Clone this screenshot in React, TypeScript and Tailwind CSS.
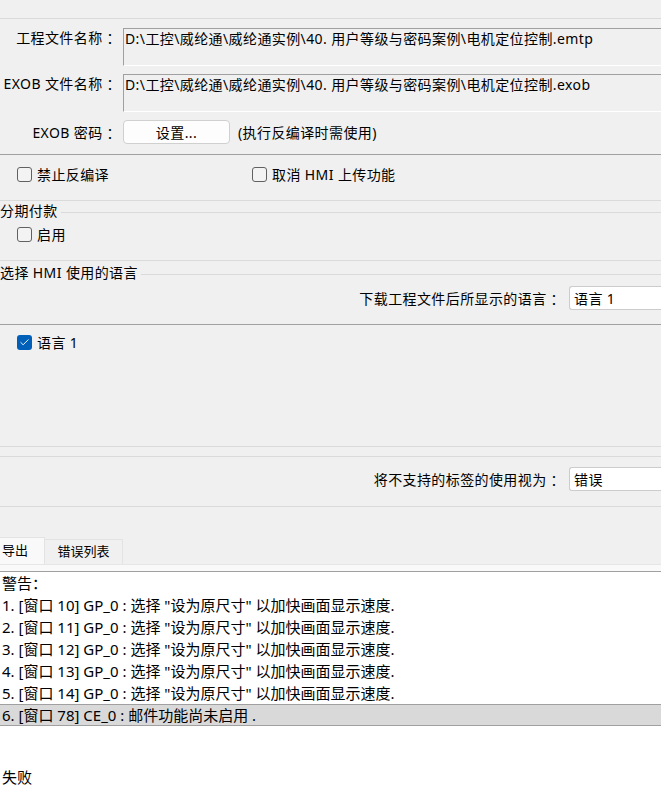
import { Check } from 'lucide-react';

const warnings = [
  '1. [窗口 10] GP_0 : 选择 "设为原尺寸" 以加快画面显示速度.',
  '2. [窗口 11] GP_0 : 选择 "设为原尺寸" 以加快画面显示速度.',
  '3. [窗口 12] GP_0 : 选择 "设为原尺寸" 以加快画面显示速度.',
  '4. [窗口 13] GP_0 : 选择 "设为原尺寸" 以加快画面显示速度.',
  '5. [窗口 14] GP_0 : 选择 "设为原尺寸" 以加快画面显示速度.',
];

function CheckBox({ checked, label }: { checked?: boolean; label: string }) {
  return (
    <label className="flex items-center gap-[5px]">
      {checked ? (
        <span className="flex h-[15px] w-[15px] items-center justify-center rounded-[3px] bg-[#005fb8]">
          <Check className="h-[11px] w-[11px] text-white" strokeWidth={2} />
        </span>
      ) : (
        <span className="h-[15px] w-[15px] rounded-[3px] border border-[#616161] bg-[#f3f3f3]" />
      )}
      <span>{label}</span>
    </label>
  );
}

function PathBox({ value }: { value: string }) {
  return (
    <div className="h-[38px] flex-1 whitespace-nowrap border-l border-t border-b border-l-[#a0a0a0] border-t-[#a0a0a0] border-b-white pl-[1px] pt-[1px] leading-[18px]">
      {value}
    </div>
  );
}

function SelectBox({ value }: { value: string }) {
  return (
    <div className="flex h-[24px] flex-1 items-center rounded-l-[3px] border border-r-0 border-[#cccccc] bg-white pl-[4px]">
      {value}
    </div>
  );
}

function GroupTitle({ text }: { text: string }) {
  return (
    <div className="flex h-[18px] items-center">
      <span className="pr-[3px]">{text}</span>
      <div className="mt-[4px] h-px flex-1 bg-[#dadada]" />
    </div>
  );
}

export default function App() {
  return (
    <div className="h-[786px] w-[661px] overflow-hidden bg-[#f0f0f0] font-['Noto_Sans','Noto_Sans_CJK_SC',sans-serif] text-[14px] tracking-[0.4px] text-black">
      <div className="h-[19px] border-b border-[#dadada]" />

      <div className="h-[136px] border-b border-[#a0a0a0] pt-[9px]">
        <div className="flex items-start">
          <div className="w-[123px] pr-[2px] pt-[1px] text-right leading-[18px]">工程文件名称 ：</div>
          <PathBox value="D:\工控\威纶通\威纶通实例\40. 用户等级与密码案例\电机定位控制.emtp" />
        </div>
        <div className="mt-[8px] flex items-start">
          <div className="w-[123px] pr-[2px] pt-[1px] text-right leading-[18px]">EXOB 文件名称 ：</div>
          <PathBox value="D:\工控\威纶通\威纶通实例\40. 用户等级与密码案例\电机定位控制.exob" />
        </div>
        <div className="mt-[8px] flex items-center">
          <div className="w-[123px] pr-[2px] text-right">EXOB 密码 ：</div>
          <button className="flex h-[24px] w-[107px] items-center justify-center rounded-[4px] border border-[#d0d0d0] bg-[#fdfdfd]">
            设置...
          </button>
          <span className="ml-[8px]">(执行反编译时需使用)</span>
        </div>
      </div>

      <div className="flex h-[46px] items-start border-b border-[#dadada] pl-[17px] pt-[9px]">
        <div className="w-[235px]">
          <CheckBox label="禁止反编译" />
        </div>
        <CheckBox label="取消 HMI 上传功能" />
      </div>

      <div className="h-[60px] border-b border-[#dadada]">
        <GroupTitle text="分期付款" />
        <div className="pl-[17px] pt-[5px]">
          <CheckBox label="启用" />
        </div>
      </div>

      <div className="h-[64px] border-b border-[#a0a0a0] pt-[2px]">
        <GroupTitle text="选择 HMI 使用的语言" />
        <div className="mt-[5px] flex items-center">
          <div className="flex-1 pr-[4px] text-right">下载工程文件后所显示的语言 ：</div>
          <div className="flex w-[92px]">
            <SelectBox value="语言 1" />
          </div>
        </div>
      </div>

      <div className="h-[122px] border-b border-[#dadada] pl-[17px] pt-[7px]">
        <CheckBox checked label="语言 1" />
      </div>

      <div className="h-[10px] border-b border-[#dadada]" />

      <div className="h-[50px] border-b border-[#dadada] pt-[10px]">
        <div className="flex items-center">
          <div className="flex-1 pr-[4px] text-right">将不支持的标签的使用视为 ：</div>
          <div className="flex w-[92px]">
            <SelectBox value="错误" />
          </div>
        </div>
      </div>

      <div className="flex h-[57px] items-end text-[13px] tracking-normal">
        <div className="flex h-[27px] w-[45px] items-center border-r border-t border-[#e3e3e3] bg-[#f9f9f9] pl-[2px]">
          导出
        </div>
        <div className="flex h-[25px] w-[78px] items-center justify-center border-r border-t border-[#e3e3e3] bg-[#f0f0f0]">
          错误列表
        </div>
      </div>
      <div className="h-[8px] border-b border-t border-b-[#a0a0a0] border-t-[#e6e6e6] bg-[#f9f9f9]" />

      <div className="h-[300px] bg-white text-[15px] tracking-normal">
        <div className="flex h-[22px] items-center pl-[2px]">警告：</div>
        {warnings.map((w) => (
          <div key={w} className="flex h-[22px] items-center whitespace-nowrap pl-[2px]">
            {w}
          </div>
        ))}
        <div className="flex h-[22px] items-center whitespace-nowrap border-y border-[#a0a0a0] bg-[#d9d9d9] pl-[2px]">
          6. [窗口 78] CE_0 : 邮件功能尚未启用 .
        </div>
        <div className="h-[42px]" />
        <div className="flex h-[18px] items-center pl-[2px] leading-[18px]">失败</div>
      </div>
    </div>
  );
}
